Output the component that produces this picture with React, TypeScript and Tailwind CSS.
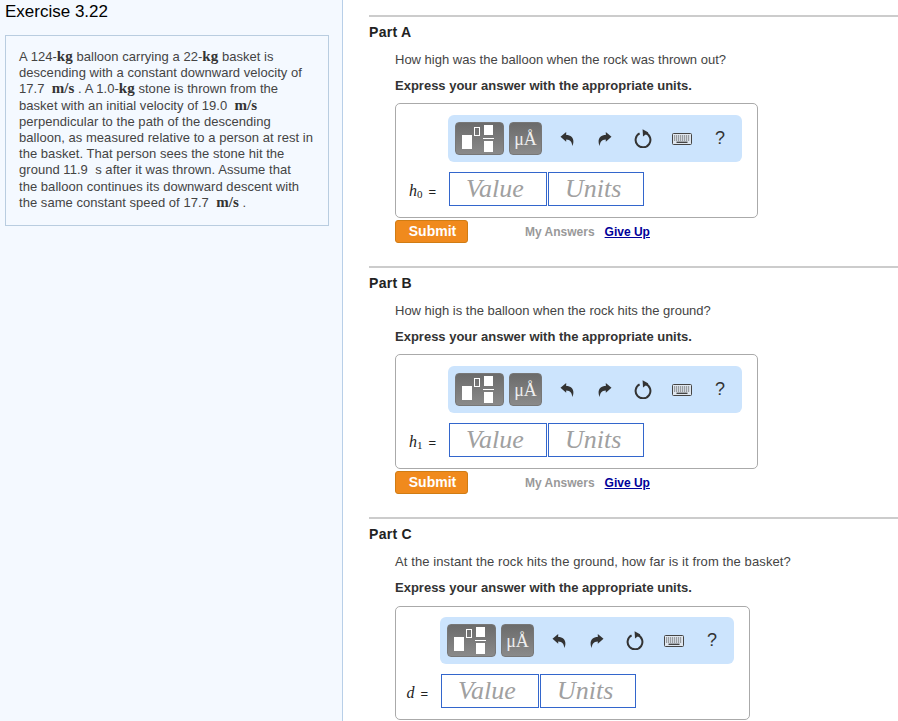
const sans = "font-['Liberation_Sans',Arial,sans-serif]";

function U({ children }: { children: string }) {
  return <span className="font-['Liberation_Serif',serif] font-bold text-[15px] leading-none text-[#333]">{children}</span>;
}

function Undo({ flip }: { flip?: boolean }) {
  return (
    <svg width="15" height="16" viewBox="0 0 14 15" className={flip ? "-scale-x-100" : ""}>
      <path d="M0.5 5.2 L6.2 0.6 L6.2 3.4 C10.6 3.4 13.6 6 13.4 10.2 C13.3 11.8 13 13.2 12.2 14.4 C12.2 11.2 10.6 8 6.2 7.9 L6.2 10.2 Z" fill="#333" />
    </svg>
  );
}

function Reset() {
  return (
    <svg width="18" height="19" viewBox="0 0 18 19">
      <path d="M5.6 4.4 A7.4 7.4 0 1 0 11.5 4" fill="none" stroke="#333" strokeWidth="2" />
      <path d="M8.6 0.2 L9 7.4 L14.4 3.4 Z" fill="#333" />
    </svg>
  );
}

function Keyboard() {
  return (
    <svg width="20" height="12" viewBox="0 0 20 12">
      <rect x="0.5" y="0.5" width="19" height="11" rx="1" fill="#dfe6ee" stroke="#444" />
      <path d="M2 3 H18 M2 5 H18 M2 7 H18" stroke="#555" strokeWidth="1" strokeDasharray="1.2 0.8" />
      <path d="M4.5 9.3 H15.5" stroke="#444" strokeWidth="1.4" />
    </svg>
  );
}

function Toolbar() {
  return (
    <div className="flex h-[47px] w-[294px] items-center rounded-[6px] bg-[#cce4fd] pl-[7px]">
      <div className="flex h-[33px] w-[49px] items-center rounded-[4px] bg-gradient-to-b from-[#6b6b6b] to-[#8a8a8a] border border-[#777] relative">
        <div className="absolute left-[6px] top-[12px] h-[14px] w-[10px] bg-white" />
        <div className="absolute left-[18px] top-[4px] h-[9px] w-[6px] border border-white" />
        <div className="absolute left-[28px] top-[2px] h-[10px] w-[9px] bg-white" />
        <div className="absolute left-[27px] top-[15px] h-px w-[11px] bg-white" />
        <div className="absolute left-[28px] top-[18px] h-[11px] w-[9px] bg-white" />
      </div>
      <div className="ml-[5px] flex h-[33px] w-[33px] items-center justify-center rounded-[4px] bg-gradient-to-b from-[#6b6b6b] to-[#8a8a8a] border border-[#777] font-['Liberation_Serif',serif] text-[18px] text-[#eee] pt-[2px] whitespace-nowrap">
        μÅ
      </div>
      <div className="ml-[18px] mt-px flex w-[14px] justify-center"><Undo /></div>
      <div className="ml-[24px] mt-px flex w-[14px] justify-center"><Undo flip /></div>
      <div className="ml-[22px] flex w-[18px] justify-center"><Reset /></div>
      <div className="ml-[20px] flex w-[20px] justify-center"><Keyboard /></div>
      <div className={`ml-[23px] text-[18px] text-[#333] ${sans}`}>?</div>
    </div>
  );
}

function Field({ label, pad }: { label: string; pad: string }) {
  return (
    <div className={`flex h-[34px] items-center border border-[#3366cc] bg-white pb-[2px] font-['Liberation_Serif',serif] italic text-[26px] text-[#a0a0a0] w-full ${pad}`}>
      {label}
    </div>
  );
}

function AnswerBox({ sym, sub, narrow }: { sym: string; sub?: string; narrow?: boolean }) {
  return (
    <div className={`rounded-[5px] border border-[#aaa] bg-white ${narrow ? "mt-[10px] w-[355px] pl-[44px] pt-[10px]" : "mt-[9px] w-[363px] pl-[52px] pt-[11px]"} pb-[11px]`}>
      <Toolbar />
      <div className="relative mt-[10px] flex gap-px">
        <div className="absolute right-full top-[7px] mr-[12px] flex items-baseline text-[#222] whitespace-nowrap">
          <span className="font-['Liberation_Serif',serif] italic text-[16px]">{sym}</span>
          {sub && <span className="font-['Liberation_Serif',serif] text-[11px] translate-y-[2px]">{sub}</span>}
          <span className={`ml-[6px] ${sans} text-[13px]`}>=</span>
        </div>
        <div className="ml-px w-[98px]"><Field label="Value" pad="pl-[16px]" /></div>
        <div className="w-[96px]"><Field label="Units" pad="pl-[16px]" /></div>
      </div>
    </div>
  );
}

function Part({ title, question, sym, sub, narrow, actions }: { title: string; question: string; sym: string; sub?: string; narrow?: boolean; actions: boolean }) {
  return (
    <section className="h-[251px] border-t-2 border-[#ccc]">
      <h3 className="mt-[7px] text-[14px] leading-[16px] font-bold tracking-[0.3px] text-[#222]">{title}</h3>
      <div className="ml-[26px]">
        <p className={`mt-[12px] text-[13px] leading-[16px] text-[#444] ${narrow ? "tracking-[0.1px]" : ""}`}>{question}</p>
        <p className="mt-[10px] text-[13px] leading-[16px] font-bold text-[#333]">Express your answer with the appropriate units.</p>
        <AnswerBox sym={sym} sub={sub} narrow={narrow} />
        {actions && (
          <div className="mt-[2px] flex items-center">
            <button className="h-[23px] w-[73px] rounded-[3px] border border-[#d07c14] bg-[#f08a1d] pl-[2px] text-[14px] font-bold text-white">Submit</button>
            <span className="ml-[57px] text-[12px] font-bold text-[#999]">My Answers</span>
            <a className="ml-[10px] text-[12px] font-bold text-[#000099] underline">Give Up</a>
          </div>
        )}
      </div>
    </section>
  );
}

export default function App() {
  return (
    <div className={`flex h-[721px] w-[898px] overflow-hidden bg-white ${sans}`}>
      <aside className="h-full w-[343px] shrink-0 border-r border-[#b8cfe8] bg-[#f4f9ff] pl-[5px]">
        <h2 className="mt-[2px] text-[17px] leading-[20px] text-black">Exercise 3.22</h2>
        <div className="mt-[13px] h-[191px] w-[324px] border border-[#b9cde0] pl-[13px] pt-[13px] text-[13px] leading-[16.2px] tracking-[0.04px] text-[#444] whitespace-nowrap">
          A 124-<U>kg</U> balloon carrying a 22-<U>kg</U> basket is<br />
          descending with a constant downward velocity of<br />
          17.7 &nbsp;<U>m/s</U> . A 1.0-<U>kg</U> stone is thrown from the<br />
          basket with an initial velocity of 19.0 &nbsp;<U>m/s</U><br />
          perpendicular to the path of the descending<br />
          balloon, as measured relative to a person at rest in<br />
          the basket. That person sees the stone hit the<br />
          ground 11.9 &nbsp;s after it was thrown. Assume that<br />
          the balloon continues its downward descent with<br />
          the same constant speed of 17.7 &nbsp;<U>m/s</U> .
        </div>
      </aside>
      <main className="ml-[26px] flex-1 pt-[15px]">
        <Part title="Part A" question="How high was the balloon when the rock was thrown out?" sym="h" sub="0" actions />
        <Part title="Part B" question="How high is the balloon when the rock hits the ground?" sym="h" sub="1" actions />
        <Part title="Part C" question="At the instant the rock hits the ground, how far is it from the basket?" sym="d" narrow actions={false} />
      </main>
    </div>
  );
}
